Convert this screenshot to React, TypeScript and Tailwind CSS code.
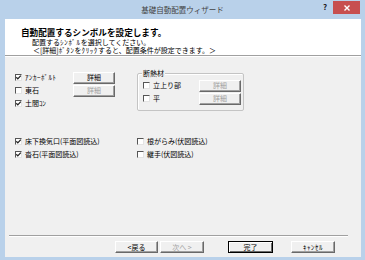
import { ReactNode } from "react";

const font = { fontFamily: '"Noto Sans CJK JP", "Noto Sans", sans-serif' };

function Check({ checked, label }: { checked?: boolean; label: ReactNode }) {
  return (
    <div className="flex items-center h-[13px]">
      <div className="relative w-[7px] h-[7px] bg-white border-t border-l border-t-[#555] border-l-[#555] border-b border-r border-b-[#e4e4e4] border-r-[#e4e4e4]">
        {checked && (
          <svg className="absolute left-[-1px] top-[-1px]" width="7" height="7" viewBox="0 0 7 7">
            <polyline points="1.3,3.3 2.8,4.9 5.8,1.6" fill="none" stroke="#222" strokeWidth="1.3" />
          </svg>
        )}
      </div>
      <span className="ml-[3px] text-[7px] leading-[9px] text-black whitespace-nowrap">{label}</span>
    </div>
  );
}

function Btn({ children, disabled, isDefault, className }: { children: ReactNode; disabled?: boolean; isDefault?: boolean; className?: string }) {
  const base = isDefault
    ? "border border-black shadow-[inset_1px_1px_0_#fff,inset_-1px_-1px_0_#696969]"
    : "border-t border-l border-t-white border-l-white border-b border-r border-b-[#696969] border-r-[#696969] shadow-[inset_-1px_-1px_0_#a0a0a0]";
  return (
    <div
      className={`flex items-center justify-center h-[12px] bg-[#f0f0f0] text-[7px] leading-[9px] whitespace-nowrap ${base} ${
        disabled ? "text-[#a0a0a0]" : "text-black"
      } ${className ?? ""}`}
    >
      {children}
    </div>
  );
}

export default function App() {
  return (
    <div className="w-[365px] h-[260px] bg-[#b9d1ea] flex flex-col overflow-hidden" style={font}>
      {/* title bar */}
      <div className="relative h-[19px] flex items-center justify-center">
        <span className="text-[7.5px] leading-[10px] text-[#444] mt-[1px]">基礎自動配置ウィザード</span>
        <span className="absolute left-[323px] top-[2px] text-[8px] leading-[10px] font-bold text-[#222]">?</span>
        <div className="absolute left-[333px] top-[1px] w-[27px] h-[13px] bg-[#c74f4f] flex items-center justify-center">
          <svg width="6" height="6" viewBox="0 0 6 6">
            <path d="M0.5 0.5 L5.5 5.5 M5.5 0.5 L0.5 5.5" stroke="#fff" strokeWidth="1.4" />
          </svg>
        </div>
      </div>

      {/* client area */}
      <div className="ml-[5px] mr-[4px] h-[238px] bg-[#f0f0f0] flex flex-col">
        <div className="h-[36px] bg-white pl-[16px] pt-[8px]">
          <div className="text-[8.6px] leading-[10px] font-bold text-black">自動配置するシンボルを設定します。</div>
          <div className="mt-[1px] pl-[11px] text-[7px] leading-[8px] text-black">
            配置する<span className="tracking-[0.8px]">ｼﾝﾎﾞﾙ</span>を選択してください。
          </div>
          <div className="pl-[12px] text-[7px] leading-[8px] text-black">
            ＜[詳細]<span className="tracking-[0.6px]">ﾎﾞﾀﾝ</span>を<span className="tracking-[0.6px]">ｸﾘｯｸ</span>すると、配置条件が設定できます。＞
          </div>
        </div>
        <div className="h-[2px] border-t border-t-[#a0a0a0] border-b border-b-white" />

        <div className="flex-1 flex flex-col pl-[10px] pt-[14px]">
          <div className="flex items-start">
            <div className="flex flex-col">
              <div className="flex items-center h-[13px]">
                <div className="w-[58px]">
                  <Check checked label={<span className="tracking-[0.5px]">ｱﾝｶｰﾎﾞﾙﾄ</span>} />
                </div>
                <Btn className="w-[42px]">詳細</Btn>
              </div>
              <div className="flex items-center h-[13px]">
                <div className="w-[58px]">
                  <Check label="東石" />
                </div>
                <Btn disabled className="w-[42px]">詳細</Btn>
              </div>
              <div className="flex items-center h-[13px]">
                <Check checked label="土間ｺﾝ" />
              </div>
            </div>

            <div className="relative ml-[22px] mt-[2px] w-[107px] border border-[#c4c4c4] rounded-[2px] pl-[5px] pr-[2px] pt-[5px] pb-[5px] shadow-[inset_1px_1px_0_#fff]">
              <span className="absolute left-[4px] top-[-5px] px-[1px] bg-[#f0f0f0] text-[7px] leading-[9px] text-black">断熱材</span>
              <div className="flex items-center h-[13px]">
                <div className="flex-1">
                  <Check label="立上り部" />
                </div>
                <Btn disabled className="w-[42px]">詳細</Btn>
              </div>
              <div className="flex items-center h-[13px]">
                <div className="flex-1">
                  <Check label="平" />
                </div>
                <Btn disabled className="w-[42px]">詳細</Btn>
              </div>
            </div>
          </div>

          <div className="mt-[24px] grid grid-cols-[122px_1fr]">
            <Check checked label="床下換気口(平面図読込)" />
            <Check label="根がらみ(伏図読込)" />
            <Check checked label="沓石(平面図読込)" />
            <Check label="継手(伏図読込)" />
          </div>
        </div>

        <div className="h-[22px] flex flex-col">
          <div className="ml-[4px] mr-[13px] h-[2px] border-t border-t-[#a0a0a0] border-b border-b-white" />
          <div className="flex items-center pl-[110px] mt-[4px]">
            <Btn className="w-[43px]">&lt;戻る</Btn>
            <Btn disabled className="ml-[2px] w-[44px]">次へ &gt;</Btn>
            <Btn isDefault className="ml-[24px] w-[45px]">完了</Btn>
            <Btn className="ml-[18px] w-[44px]">
              <span className="tracking-[0.5px]">ｷｬﾝｾﾙ</span>
            </Btn>
          </div>
        </div>
      </div>
    </div>
  );
}
